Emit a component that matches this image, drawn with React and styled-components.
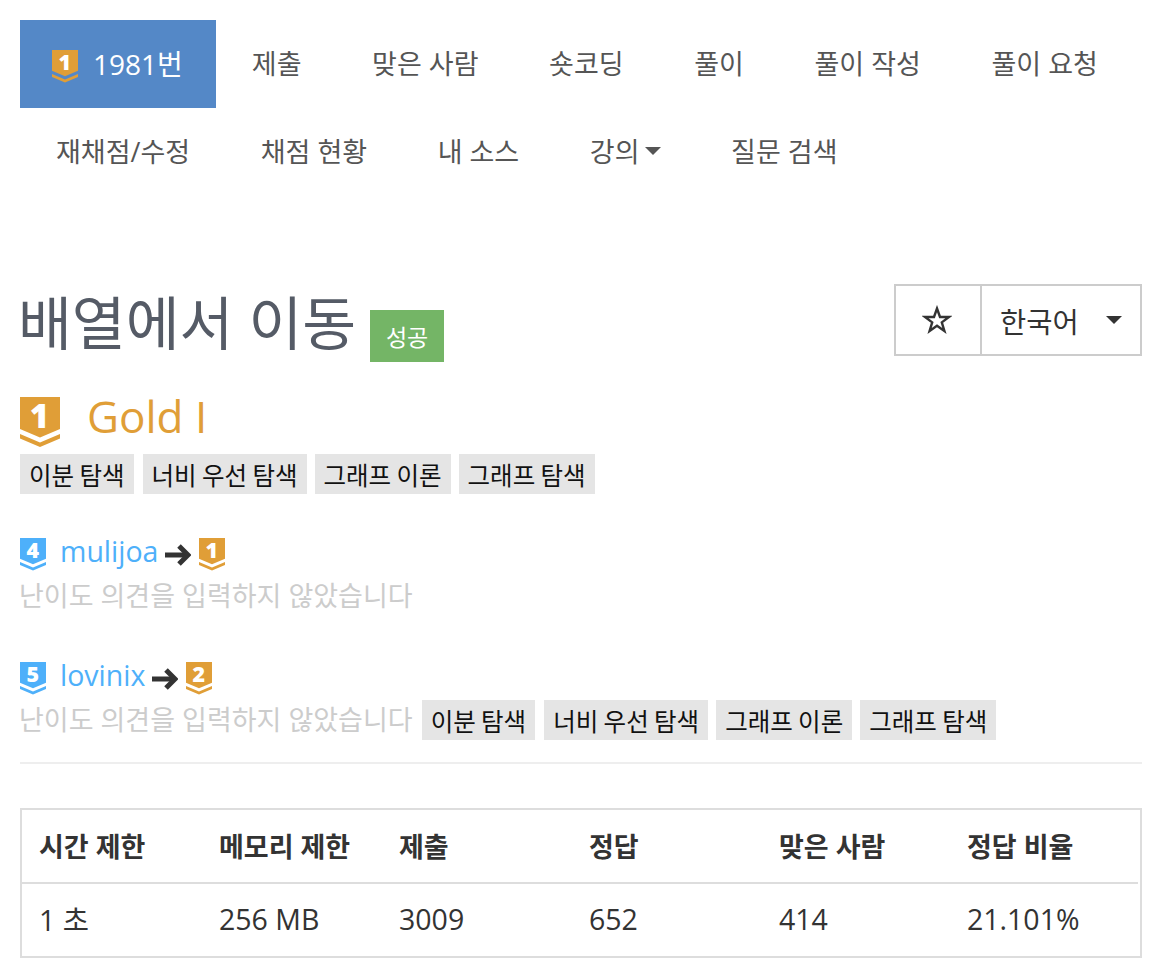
import styled, { createGlobalStyle } from "styled-components";

const GOLD = "#e09e37";
const BLUE = "#4eb0fa";

const GlobalStyle = createGlobalStyle`
  html, body {
    margin: 0;
    padding: 0;
    background: #fff;
    font-family: "Open Sans", "Noto Sans CJK KR", sans-serif;
    color: #333;
  }
  * {
    box-sizing: border-box;
  }
`;

const TierIcon = ({ size, level, color, mark = "#fff" }) => (
  <TierSvg $size={size} viewBox="0 0 40 50">
    <path d="M0 0H40V32L20 40.5L0 32Z" fill={color} />
    <path d="M0 37L20 45.5L40 37V41.5L20 50L0 41.5Z" fill={color} />
    <text
      x="19.5"
      y="31"
      textAnchor="middle"
      fontSize="33"
      fontWeight="800"
      fontFamily="'Open Sans', sans-serif"
      fill={mark}
    >
      {level}
    </text>
  </TierSvg>
);

const Arrow = () => (
  <ArrowSvg viewBox="0 0 26 22">
    <path d="M0 11H22" stroke="#333" strokeWidth="5" fill="none" />
    <path d="M14 2L23 11L14 20" stroke="#333" strokeWidth="5" fill="none" />
  </ArrowSvg>
);

const Opinion = ({ level, name, from, to, children }) => (
  <OpinionBlock>
    <OpinionHead>
      <TierIcon size={26} level={level} color={BLUE} />
      <UserName>{name}</UserName>
      <Arrow />
      <TierIcon size={26} level={to} color={from} />
    </OpinionHead>
    <OpinionBody>
      <Hint>난이도 의견을 입력하지 않았습니다</Hint>
      {children}
    </OpinionBody>
  </OpinionBlock>
);

const tagNames = ["이분 탐색", "너비 우선 탐색", "그래프 이론", "그래프 탐색"];

const TagList = () => (
  <Tags>
    {tagNames.map((t) => (
      <Tag key={t}>{t}</Tag>
    ))}
  </Tags>
);

const App = () => {
  return (
    <Page>
      <GlobalStyle />
      <Nav>
        <Tab $active>
          <TabBadge>
            <TierIcon size={26} level="1" color={GOLD} />
          </TabBadge>
          <span>1981번</span>
        </Tab>
        <Tab>제출</Tab>
        <Tab>맞은 사람</Tab>
        <Tab>숏코딩</Tab>
        <Tab>풀이</Tab>
        <Tab>풀이 작성</Tab>
        <Tab>풀이 요청</Tab>
        <Tab>재채점/수정</Tab>
        <Tab>채점 현황</Tab>
        <Tab>내 소스</Tab>
        <Tab>
          강의
          <Caret $color="#555" />
        </Tab>
        <Tab>질문 검색</Tab>
      </Nav>

      <TitleRow>
        <TitleLeft>
          <Title>배열에서 이동</Title>
          <Result>성공</Result>
        </TitleLeft>
        <ButtonGroup>
          <StarButton>
            <svg width="30" height="30" viewBox="0 0 30 30">
              <path
                d="M15 3.5L18 12H27L19.8 17.4L22.4 26L15 20.8L7.6 26L10.2 17.4L3 12H12Z"
                fill="none"
                stroke="#333"
                strokeWidth="2.4"
              />
            </svg>
          </StarButton>
          <LangButton>
            한국어
            <Caret $color="#333" />
          </LangButton>
        </ButtonGroup>
      </TitleRow>

      <TierRow>
        <TierIcon size={40} level="1" color={GOLD} />
        <TierName>Gold I</TierName>
      </TierRow>
      <TagList />

      <Opinion level="4" name="mulijoa" from={GOLD} to="1" />
      <Opinion level="5" name="lovinix" from={GOLD} to="2">
        <TagList />
      </Opinion>

      <Rule />

      <TablePanel>
        <InfoTable>
          <thead>
            <tr>
              <Head $w={180}>시간 제한</Head>
              <Head $w={180}>메모리 제한</Head>
              <Head $w={190}>제출</Head>
              <Head $w={190}>정답</Head>
              <Head $w={188}>맞은 사람</Head>
              <Head>정답 비율</Head>
            </tr>
          </thead>
          <tbody>
            <tr>
              <Cell>1 초</Cell>
              <Cell>256 MB</Cell>
              <Cell>3009</Cell>
              <Cell>652</Cell>
              <Cell>414</Cell>
              <Cell>21.101%</Cell>
            </tr>
          </tbody>
        </InfoTable>
      </TablePanel>
    </Page>
  );
};

const Page = styled.div`
  padding: 20px 16px 0 20px;
  width: 1158px;
  height: 974px;
  overflow: hidden;
`;

const Nav = styled.nav`
  display: flex;
  flex-wrap: wrap;
`;

const Tab = styled.a`
  display: flex;
  align-items: center;
  gap: ${(p) => (p.$active ? "15px" : "0")};
  height: 88px;
  padding: ${(p) => (p.$active ? "0 33px 3px 32px" : "0 34.6px 3px 36px")};
  font-size: ${(p) => (p.$active ? "28px" : "27px")};
  color: ${(p) => (p.$active ? "#fff" : "#555")};
  background: ${(p) => (p.$active ? "#5488c7" : "transparent")};
  white-space: nowrap;
`;

const TabBadge = styled.span`
  display: flex;
  margin-top: 7px;
`;

const Caret = styled.i`
  display: inline-block;
  width: 0;
  height: 0;
  margin-left: 5px;
  border-top: 8px solid ${(p) => p.$color};
  border-left: 8.5px solid transparent;
  border-right: 8.5px solid transparent;
`;

const TierSvg = styled.svg`
  flex: none;
  overflow: visible;
  width: ${(p) => p.$size}px;
  height: ${(p) => (p.$size * 50) / 40}px;
`;

const ArrowSvg = styled.svg`
  flex: none;
  width: 26px;
  height: 22px;
  margin: 0 8px 0 7px;
`;

const TitleRow = styled.div`
  display: flex;
  justify-content: space-between;
  align-items: flex-start;
  margin-top: 88px;
`;

const TitleLeft = styled.div`
  display: flex;
  align-items: flex-end;
  gap: 14px;
  height: 78px;
`;

const Title = styled.h1`
  margin: 0 0 0 -2px;
  font-size: 58.5px;
  font-weight: 400;
  line-height: 80px;
  color: #555b66;
`;

const Result = styled.span`
  display: flex;
  align-items: center;
  justify-content: center;
  width: 74px;
  height: 52px;
  font-size: 23px;
  color: #fff;
  background: #74b566;
`;

const ButtonGroup = styled.div`
  display: flex;
  height: 72px;
  border: 2px solid #ccc;
`;

const StarButton = styled.div`
  display: flex;
  align-items: center;
  justify-content: center;
  width: 86px;
  padding-right: 2px;
  border-right: 2px solid #ccc;
`;

const LangButton = styled.div`
  display: flex;
  align-items: center;
  justify-content: space-between;
  width: 158px;
  padding: 0 18px;
  font-size: 28.5px;
  color: #333;
`;

const TierRow = styled.div`
  display: flex;
  align-items: center;
  gap: 27px;
  margin-top: 35px;
  height: 50px;
`;

const TierName = styled.span`
  margin-bottom: 12px;
  font-size: 44px;
  line-height: 50px;
  color: ${GOLD};
`;

const Tags = styled.div`
  display: flex;
  gap: 8px;
  margin-top: 7px;
`;

const Tag = styled.span`
  display: flex;
  align-items: center;
  height: 40px;
  padding: 0 9px;
  font-size: 24.5px;
  word-spacing: -1px;
  color: #111;
  background: #e5e5e5;
  &:first-child {
    margin-right: 1px;
  }
`;

const OpinionBlock = styled.div`
  margin-top: 44px;
`;

const OpinionHead = styled.div`
  display: flex;
  align-items: center;
  height: 33px;
`;

const UserName = styled.span`
  margin: 0 0 7px 14px;
  font-size: 28.5px;
  color: ${BLUE};
`;

const OpinionBody = styled.div`
  display: flex;
  align-items: flex-start;
  gap: 9px;
  margin-top: 5px;
  min-height: 42px;
  & > div {
    margin-top: 0;
  }
`;

const Hint = styled.span`
  margin-left: -1px;
  font-size: 27px;
  line-height: 40px;
  color: #ccc;
`;

const Rule = styled.hr`
  margin: 20px 0 0;
  border: 0;
  border-top: 2px solid #eee;
`;

const TablePanel = styled.div`
  margin-top: 44px;
  padding-right: 2px;
  border: 2px solid #ddd;
`;

const InfoTable = styled.table`
  width: 100%;
  border-collapse: collapse;
  table-layout: fixed;
`;

const Head = styled.th`
  width: ${(p) => (p.$w ? `${p.$w}px` : "auto")};
  height: 73px;
  padding: 0 0 1px 17px;
  font-size: 27px;
  font-weight: 700;
  text-align: left;
  color: #333;
  border-bottom: 2px solid #ddd;
`;

const Cell = styled.td`
  height: 73px;
  padding: 0 0 3px 17px;
  font-size: 28.5px;
  color: #333;
`;

export default App;
